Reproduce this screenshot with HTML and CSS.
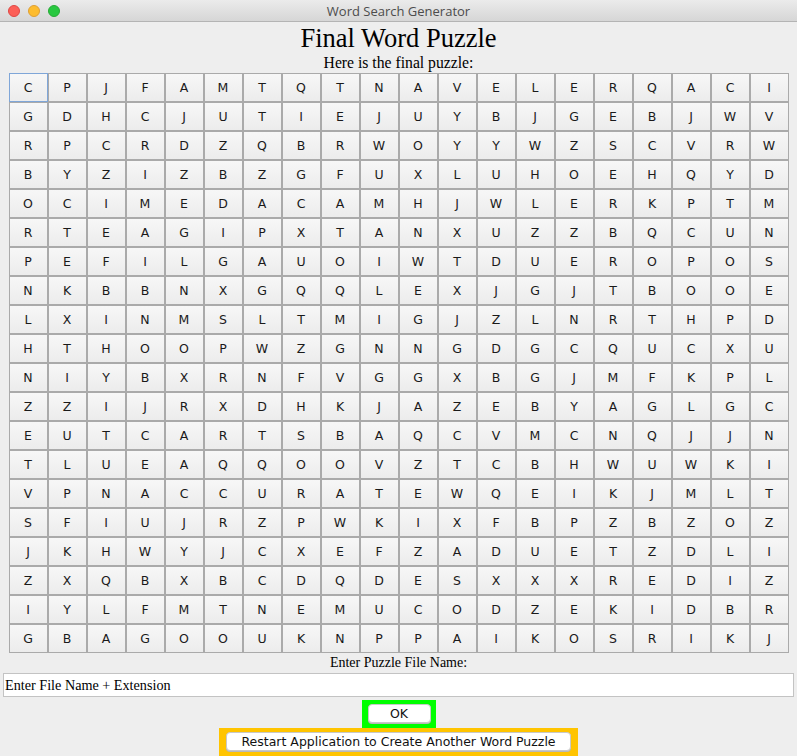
FILE: index.html
```html
<!DOCTYPE html>
<html>
<head>
<meta charset="utf-8">
<title>Word Search Generator</title>
<link rel="stylesheet" href="styles.css">
</head>
<body>
<div class="window">
  <div class="titlebar">
    <div class="lights">
      <span class="light red"></span>
      <span class="light yellow"></span>
      <span class="light green"></span>
    </div>
    <div class="title">Word Search Generator</div>
  </div>
  <div class="content">
    <h1 class="heading">Final Word Puzzle</h1>
    <p class="subheading">Here is the final puzzle:</p>
    <div class="grid">
      <div class="cell focus">C</div><div class="cell">P</div><div class="cell">J</div><div class="cell">F</div><div class="cell">A</div><div class="cell">M</div><div class="cell">T</div><div class="cell">Q</div><div class="cell">T</div><div class="cell">N</div><div class="cell">A</div><div class="cell">V</div><div class="cell">E</div><div class="cell">L</div><div class="cell">E</div><div class="cell">R</div><div class="cell">Q</div><div class="cell">A</div><div class="cell">C</div><div class="cell">I</div>
      <div class="cell">G</div><div class="cell">D</div><div class="cell">H</div><div class="cell">C</div><div class="cell">J</div><div class="cell">U</div><div class="cell">T</div><div class="cell">I</div><div class="cell">E</div><div class="cell">J</div><div class="cell">U</div><div class="cell">Y</div><div class="cell">B</div><div class="cell">J</div><div class="cell">G</div><div class="cell">E</div><div class="cell">B</div><div class="cell">J</div><div class="cell">W</div><div class="cell">V</div>
      <div class="cell">R</div><div class="cell">P</div><div class="cell">C</div><div class="cell">R</div><div class="cell">D</div><div class="cell">Z</div><div class="cell">Q</div><div class="cell">B</div><div class="cell">R</div><div class="cell">W</div><div class="cell">O</div><div class="cell">Y</div><div class="cell">Y</div><div class="cell">W</div><div class="cell">Z</div><div class="cell">S</div><div class="cell">C</div><div class="cell">V</div><div class="cell">R</div><div class="cell">W</div>
      <div class="cell">B</div><div class="cell">Y</div><div class="cell">Z</div><div class="cell">I</div><div class="cell">Z</div><div class="cell">B</div><div class="cell">Z</div><div class="cell">G</div><div class="cell">F</div><div class="cell">U</div><div class="cell">X</div><div class="cell">L</div><div class="cell">U</div><div class="cell">H</div><div class="cell">O</div><div class="cell">E</div><div class="cell">H</div><div class="cell">Q</div><div class="cell">Y</div><div class="cell">D</div>
      <div class="cell">O</div><div class="cell">C</div><div class="cell">I</div><div class="cell">M</div><div class="cell">E</div><div class="cell">D</div><div class="cell">A</div><div class="cell">C</div><div class="cell">A</div><div class="cell">M</div><div class="cell">H</div><div class="cell">J</div><div class="cell">W</div><div class="cell">L</div><div class="cell">E</div><div class="cell">R</div><div class="cell">K</div><div class="cell">P</div><div class="cell">T</div><div class="cell">M</div>
      <div class="cell">R</div><div class="cell">T</div><div class="cell">E</div><div class="cell">A</div><div class="cell">G</div><div class="cell">I</div><div class="cell">P</div><div class="cell">X</div><div class="cell">T</div><div class="cell">A</div><div class="cell">N</div><div class="cell">X</div><div class="cell">U</div><div class="cell">Z</div><div class="cell">Z</div><div class="cell">B</div><div class="cell">Q</div><div class="cell">C</div><div class="cell">U</div><div class="cell">N</div>
      <div class="cell">P</div><div class="cell">E</div><div class="cell">F</div><div class="cell">I</div><div class="cell">L</div><div class="cell">G</div><div class="cell">A</div><div class="cell">U</div><div class="cell">O</div><div class="cell">I</div><div class="cell">W</div><div class="cell">T</div><div class="cell">D</div><div class="cell">U</div><div class="cell">E</div><div class="cell">R</div><div class="cell">O</div><div class="cell">P</div><div class="cell">O</div><div class="cell">S</div>
      <div class="cell">N</div><div class="cell">K</div><div class="cell">B</div><div class="cell">B</div><div class="cell">N</div><div class="cell">X</div><div class="cell">G</div><div class="cell">Q</div><div class="cell">Q</div><div class="cell">L</div><div class="cell">E</div><div class="cell">X</div><div class="cell">J</div><div class="cell">G</div><div class="cell">J</div><div class="cell">T</div><div class="cell">B</div><div class="cell">O</div><div class="cell">O</div><div class="cell">E</div>
      <div class="cell">L</div><div class="cell">X</div><div class="cell">I</div><div class="cell">N</div><div class="cell">M</div><div class="cell">S</div><div class="cell">L</div><div class="cell">T</div><div class="cell">M</div><div class="cell">I</div><div class="cell">G</div><div class="cell">J</div><div class="cell">Z</div><div class="cell">L</div><div class="cell">N</div><div class="cell">R</div><div class="cell">T</div><div class="cell">H</div><div class="cell">P</div><div class="cell">D</div>
      <div class="cell">H</div><div class="cell">T</div><div class="cell">H</div><div class="cell">O</div><div class="cell">O</div><div class="cell">P</div><div class="cell">W</div><div class="cell">Z</div><div class="cell">G</div><div class="cell">N</div><div class="cell">N</div><div class="cell">G</div><div class="cell">D</div><div class="cell">G</div><div class="cell">C</div><div class="cell">Q</div><div class="cell">U</div><div class="cell">C</div><div class="cell">X</div><div class="cell">U</div>
      <div class="cell">N</div><div class="cell">I</div><div class="cell">Y</div><div class="cell">B</div><div class="cell">X</div><div class="cell">R</div><div class="cell">N</div><div class="cell">F</div><div class="cell">V</div><div class="cell">G</div><div class="cell">G</div><div class="cell">X</div><div class="cell">B</div><div class="cell">G</div><div class="cell">J</div><div class="cell">M</div><div class="cell">F</div><div class="cell">K</div><div class="cell">P</div><div class="cell">L</div>
      <div class="cell">Z</div><div class="cell">Z</div><div class="cell">I</div><div class="cell">J</div><div class="cell">R</div><div class="cell">X</div><div class="cell">D</div><div class="cell">H</div><div class="cell">K</div><div class="cell">J</div><div class="cell">A</div><div class="cell">Z</div><div class="cell">E</div><div class="cell">B</div><div class="cell">Y</div><div class="cell">A</div><div class="cell">G</div><div class="cell">L</div><div class="cell">G</div><div class="cell">C</div>
      <div class="cell">E</div><div class="cell">U</div><div class="cell">T</div><div class="cell">C</div><div class="cell">A</div><div class="cell">R</div><div class="cell">T</div><div class="cell">S</div><div class="cell">B</div><div class="cell">A</div><div class="cell">Q</div><div class="cell">C</div><div class="cell">V</div><div class="cell">M</div><div class="cell">C</div><div class="cell">N</div><div class="cell">Q</div><div class="cell">J</div><div class="cell">J</div><div class="cell">N</div>
      <div class="cell">T</div><div class="cell">L</div><div class="cell">U</div><div class="cell">E</div><div class="cell">A</div><div class="cell">Q</div><div class="cell">Q</div><div class="cell">O</div><div class="cell">O</div><div class="cell">V</div><div class="cell">Z</div><div class="cell">T</div><div class="cell">C</div><div class="cell">B</div><div class="cell">H</div><div class="cell">W</div><div class="cell">U</div><div class="cell">W</div><div class="cell">K</div><div class="cell">I</div>
      <div class="cell">V</div><div class="cell">P</div><div class="cell">N</div><div class="cell">A</div><div class="cell">C</div><div class="cell">C</div><div class="cell">U</div><div class="cell">R</div><div class="cell">A</div><div class="cell">T</div><div class="cell">E</div><div class="cell">W</div><div class="cell">Q</div><div class="cell">E</div><div class="cell">I</div><div class="cell">K</div><div class="cell">J</div><div class="cell">M</div><div class="cell">L</div><div class="cell">T</div>
      <div class="cell">S</div><div class="cell">F</div><div class="cell">I</div><div class="cell">U</div><div class="cell">J</div><div class="cell">R</div><div class="cell">Z</div><div class="cell">P</div><div class="cell">W</div><div class="cell">K</div><div class="cell">I</div><div class="cell">X</div><div class="cell">F</div><div class="cell">B</div><div class="cell">P</div><div class="cell">Z</div><div class="cell">B</div><div class="cell">Z</div><div class="cell">O</div><div class="cell">Z</div>
      <div class="cell">J</div><div class="cell">K</div><div class="cell">H</div><div class="cell">W</div><div class="cell">Y</div><div class="cell">J</div><div class="cell">C</div><div class="cell">X</div><div class="cell">E</div><div class="cell">F</div><div class="cell">Z</div><div class="cell">A</div><div class="cell">D</div><div class="cell">U</div><div class="cell">E</div><div class="cell">T</div><div class="cell">Z</div><div class="cell">D</div><div class="cell">L</div><div class="cell">I</div>
      <div class="cell">Z</div><div class="cell">X</div><div class="cell">Q</div><div class="cell">B</div><div class="cell">X</div><div class="cell">B</div><div class="cell">C</div><div class="cell">D</div><div class="cell">Q</div><div class="cell">D</div><div class="cell">E</div><div class="cell">S</div><div class="cell">X</div><div class="cell">X</div><div class="cell">X</div><div class="cell">R</div><div class="cell">E</div><div class="cell">D</div><div class="cell">I</div><div class="cell">Z</div>
      <div class="cell">I</div><div class="cell">Y</div><div class="cell">L</div><div class="cell">F</div><div class="cell">M</div><div class="cell">T</div><div class="cell">N</div><div class="cell">E</div><div class="cell">M</div><div class="cell">U</div><div class="cell">C</div><div class="cell">O</div><div class="cell">D</div><div class="cell">Z</div><div class="cell">E</div><div class="cell">K</div><div class="cell">I</div><div class="cell">D</div><div class="cell">B</div><div class="cell">R</div>
      <div class="cell">G</div><div class="cell">B</div><div class="cell">A</div><div class="cell">G</div><div class="cell">O</div><div class="cell">O</div><div class="cell">U</div><div class="cell">K</div><div class="cell">N</div><div class="cell">P</div><div class="cell">P</div><div class="cell">A</div><div class="cell">I</div><div class="cell">K</div><div class="cell">O</div><div class="cell">S</div><div class="cell">R</div><div class="cell">I</div><div class="cell">K</div><div class="cell">J</div>
    </div>
    <p class="label">Enter Puzzle File Name:</p>
    <div class="field">Enter File Name + Extension</div>
    <div class="ok-wrap"><button class="btn ok">OK</button></div>
    <div class="restart-wrap"><button class="btn restart">Restart Application to Create Another Word Puzzle</button></div>
  </div>
</div>
</body>
</html>
```
FILE: styles.css
```css
html, body {
  margin: 0;
  padding: 0;
  background: #eeeeee;
}
.window {
  width: 797px;
  height: 756px;
  display: flex;
  flex-direction: column;
  overflow: hidden;
  background: #eeeeee;
}
.titlebar {
  height: 21px;
  flex: none;
  border-bottom: 1px solid #b4b4b4;
  background: linear-gradient(#ebebeb, #d6d6d6);
  display: flex;
  align-items: center;
  position: relative;
}
.lights {
  display: flex;
  gap: 8px;
  padding-left: 8px;
}
.light {
  width: 12px;
  height: 12px;
  border-radius: 50%;
  box-sizing: border-box;
}
.light.red { background: #fc5f57; border: 1px solid #df4744; }
.light.yellow { background: #fdbc2e; border: 1px solid #de9f34; }
.light.green { background: #28c840; border: 1px solid #27aa35; }
.title {
  position: absolute;
  left: 0;
  right: 0;
  top: 0;
  line-height: 22px;
  text-align: center;
  font-family: "Open Sans", "DejaVu Sans", sans-serif;
  font-size: 13px;
  color: #4c4c4c;
}
.content {
  display: flex;
  flex-direction: column;
  align-items: center;
  font-family: "Liberation Serif", serif;
  color: #000;
}
.heading {
  margin: 0;
  font-weight: normal;
  font-size: 26.5px;
  line-height: 32px;
  height: 31px;
}
.subheading {
  margin: 0;
  font-size: 15.7px;
  line-height: 20px;
}
.grid {
  display: grid;
  grid-template-columns: repeat(20, 39px);
  grid-template-rows: repeat(20, 29px);
  width: 780px;
}
.cell {
  box-sizing: border-box;
  border: 1px solid #aaaaaa;
  background: linear-gradient(#f7f7f7, #ececec);
  display: flex;
  align-items: center;
  justify-content: center;
  font-family: "DejaVu Sans", "Liberation Sans", sans-serif;
  font-size: 12.5px;
  color: #1a1a1a;
}
.cell.focus {
  border-color: #7fa6d8;
}
.label {
  margin: 0;
  font-size: 14px;
  line-height: 18px;
  margin-top: 1px;
}
.field {
  box-sizing: border-box;
  width: 791px;
  height: 24px;
  margin-top: 1px;
  background: #ffffff;
  border: 1px solid #c3c3c3;
  font-size: 14.2px;
  line-height: 22px;
  padding-left: 1px;
}
.ok-wrap {
  margin-top: 3px;
  background: #00ff00;
  padding: 4px 5px 5px 6px;
  display: flex;
}
.restart-wrap {
  background: #ffc400;
  padding: 4px 7px 5px 7px;
  display: flex;
}
.btn {
  margin: 0;
  background: #ffffff;
  border: 1px solid #c8c8c8;
  border-radius: 4px;
  height: 19px;
  padding: 0;
  font-family: "DejaVu Sans", "Liberation Sans", sans-serif;
  font-size: 12.5px;
  color: #111;
  line-height: 17px;
  box-shadow: 0 1px 0 #b8b8b8;
}
.btn.ok {
  width: 63px;
}
.btn.restart {
  width: 345px;
}
```
